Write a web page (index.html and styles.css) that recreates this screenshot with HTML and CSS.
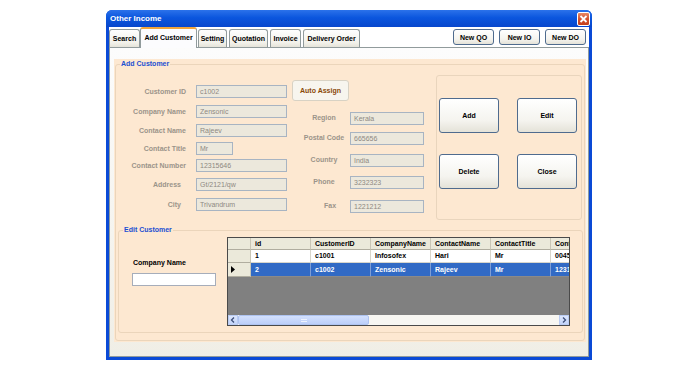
FILE: index.html
```html
<!DOCTYPE html>
<html lang="en">
  <head>
    <meta charset="UTF-8" />
    <title>Other Income</title>
    <link rel="stylesheet" href="styles.css">
  </head>
  <body>
    <div class="window">
      <div class="titlebar">
        <span class="title">Other Income</span>
        <span class="close">
          <svg width="11" height="12" viewBox="0 0 11 12"><path d="M2.5 3 L8.5 9 M8.5 3 L2.5 9" stroke="#fff" stroke-width="1.8" /></svg>
        </span>
      </div>

      <div class="body">
        <div class="toprow">
          <div class="tabs">
            <div class="tab t-search">Search</div>
            <div class="tab active">Add Customer</div>
            <div class="tab t-setting">Setting</div>
            <div class="tab t-quote">Quotation</div>
            <div class="tab t-invoice">Invoice</div>
            <div class="tab t-delivery">Delivery Order</div>
          </div>
          <div class="newbtns">
            <button class="btn new">New QO</button>
            <button class="btn new">New IO</button>
            <button class="btn new">New DO</button>
          </div>
        </div>

        <div class="tabpage">
          <div class="panel">
            <div class="group add">
              <div class="group-title">Add Customer</div>
              <div class="add-body">
                <div class="form left">
                  <label>Customer ID</label><div class="field">c1002</div>
                  <label>Company Name</label><div class="field">Zensonic</div>
                  <label>Contact Name</label><div class="field">Rajeev</div>
                  <label>Contact Title</label><div class="field short">Mr</div>
                  <label>Contact Number</label><div class="field">12315646</div>
                  <label class="inset">Address</label><div class="field">Gt/2121/qw</div>
                  <label class="inset">City</label><div class="field">Trivandrum</div>
                </div>

                <div class="middle">
                  <button class="auto">Auto Assign</button>
                  <div class="form right">
                    <label>Region</label><div class="field">Kerala</div>
                    <label>Postal Code</label><div class="field">665656</div>
                    <label>Country</label><div class="field">India</div>
                    <label>Phone</label><div class="field">3232323</div>
                    <label class="fax">Fax</label><div class="field">1221212</div>
                  </div>
                </div>

                <div class="actions">
                  <button class="btn big">Add</button>
                  <button class="btn big">Edit</button>
                  <button class="btn big">Delete</button>
                  <button class="btn big">Close</button>
                </div>
              </div>

              <div class="group edit">
                <div class="group-title">Edit Customer</div>
                <div class="edit-body">
                  <div class="search-box">
                    <div class="search-label">Company Name</div>
                    <div class="search-input"></div>
                  </div>

                  <div class="datagrid">
                    <div class="grid-rows">
                      <div class="cell corner"></div>
                      <div class="cell head">id</div>
                      <div class="cell head">CustomerID</div>
                      <div class="cell head">CompanyName</div>
                      <div class="cell head">ContactName</div>
                      <div class="cell head">ContactTitle</div>
                      <div class="cell head">ContactNumber</div>

                      <div class="cell rowhead"></div>
                      <div class="cell">1</div>
                      <div class="cell">c1001</div>
                      <div class="cell">Infosofex</div>
                      <div class="cell">Hari</div>
                      <div class="cell">Mr</div>
                      <div class="cell">0045</div>

                      <div class="cell rowhead current">
                        <svg width="4" height="7" viewBox="0 0 4 7"><path d="M0 0 L4 3.5 L0 7 Z" fill="#000" /></svg>
                      </div>
                      <div class="cell sel">2</div>
                      <div class="cell sel">c1002</div>
                      <div class="cell sel">Zensonic</div>
                      <div class="cell sel">Rajeev</div>
                      <div class="cell sel">Mr</div>
                      <div class="cell sel">1231</div>
                    </div>
                    <div class="grid-empty"></div>
                    <div class="hscroll">
                      <div class="sb-btn">
                        <svg width="6" height="6" viewBox="0 0 6 6"><path d="M4 0.5 L1.5 3 L4 5.5" stroke="#3d4f7a" stroke-width="1.3" fill="none" /></svg>
                      </div>
                      <div class="sb-thumb"><span class="grip"></span></div>
                      <div class="sb-track"></div>
                      <div class="sb-btn">
                        <svg width="6" height="6" viewBox="0 0 6 6"><path d="M2 0.5 L4.5 3 L2 5.5" stroke="#3d4f7a" stroke-width="1.3" fill="none" /></svg>
                      </div>
                    </div>
                  </div>
                </div>
              </div>
            </div>
          </div>
        </div>
      </div>
    </div>
  </body>
</html>
```

FILE: styles.css
```css
* {
  box-sizing: border-box;
}

body {
  margin: 0;
  background-color: #fff;
  font-family: "Liberation Sans", Arial, sans-serif;
  font-size: 7px;
  font-weight: bold;
  color: #000;
}

button {
  font-family: inherit;
  font-size: 7px;
  font-weight: bold;
  padding: 0;
  cursor: pointer;
}

.window {
  width: 486px;
  height: 350px;
  margin: 10px 0 0 106px;
  padding: 0 3px 3px;
  background-color: #0a4ad6;
  border-radius: 6px 6px 0 0;
  display: flex;
  flex-direction: column;
}

.titlebar {
  height: 17px;
  margin: 0 -3px;
  padding: 0 2px 0 4px;
  display: flex;
  align-items: center;
  justify-content: space-between;
  background: linear-gradient(#2b72ea, #0b56de 45%, #0847cc);
  border-radius: 6px 6px 0 0;
}

.title {
  color: #fff;
  font-size: 8px;
}

.close {
  width: 13px;
  height: 14px;
  display: flex;
  align-items: center;
  justify-content: center;
  background: linear-gradient(#e98a66, #d5512b 50%, #c4401c);
  border: 1px solid #fff;
  border-radius: 2px;
}

.body {
  flex: 1;
  background-color: #fff;
  display: flex;
  flex-direction: column;
}

.toprow {
  height: 20px;
  display: flex;
  align-items: flex-end;
}

.tabs {
  display: flex;
  align-items: flex-end;
}

.tab {
  height: 18px;
  line-height: 17px;
  text-align: center;
  white-space: nowrap;
  border: 1px solid #919b9c;
  border-bottom: none;
  border-radius: 3px 3px 0 0;
  background: linear-gradient(#fefefe, #f2f1ea 75%, #e5e3d9);
  margin-right: 2px;
}

.t-search { width: 31px; margin-right: 0; }
.t-setting { width: 29px; }
.t-quote { width: 39px; }
.t-invoice { width: 31px; }
.t-delivery { width: 57px; }

.tab.active {
  width: 57px;
  height: 21px;
  line-height: 17px;
  margin-right: 1px;
  margin-bottom: -1px;
  background: #fcfcfe;
  border-top: 2px solid #f0a53c;
  position: relative;
  z-index: 1;
}

.newbtns {
  margin-left: auto;
  align-self: flex-start;
  margin-top: 2px;
  padding-right: 3px;
  display: flex;
  gap: 5px;
}

.btn {
  border: 1px solid #4f6b8e;
  border-radius: 3px;
  background: linear-gradient(#ffffff, #f5f4ef 65%, #e4e2d8);
  color: #000;
}

.btn.new {
  width: 41px;
  height: 16px;
}

.btn.big {
  width: 60px;
  height: 35px;
}

.tabpage {
  flex: 1;
  border: 1px solid #919b9c;
  background: linear-gradient(#fcfcfc, #f5f4ef 60%, #f0eee6);
  padding: 11px 3px 0 4px;
}

.panel {
  width: 472px;
  height: 283px;
  background-color: #fde8d1;
  padding: 5px 1px 0 1px;
}

.group {
  border: 1px solid #ebd5bb;
  border-radius: 3px;
}

.group-title {
  width: fit-content;
  height: 10px;
  line-height: 10px;
  margin: -6px 0 0 4px;
  padding: 0 1px;
  background-color: #fde8d1;
  color: #1c4fd2;
}

.group.add {
  width: 470px;
  height: 277px;
}

.add-body {
  display: flex;
  align-items: flex-start;
}

.form {
  display: grid;
}

.form label {
  white-space: nowrap;
  color: #9b948a;
}

.form.left {
  margin-top: 16px;
  grid-template-columns: 71px 91px;
  grid-template-rows: 20px 19px 18px 17px 19px 20px 13px;
  column-gap: 9px;
}

.form.left label {
  text-align: right;
  line-height: 13px;
  padding-right: 1px;
}

.form.left label.inset {
  padding-right: 6px;
}

.field {
  height: 13px;
  border: 1px solid #a8b4c2;
  background-color: #ece8dc;
  color: #8e8982;
  font-weight: normal;
  line-height: 11px;
  padding-left: 3px;
  white-space: nowrap;
}

.field.short {
  width: 37px;
}

.middle {
  width: 132px;
  margin-left: 5px;
}

.auto {
  width: 57px;
  height: 21px;
  margin-top: 11px;
  border: 1px solid #d8d2c4;
  border-radius: 3px;
  background-color: #f7f5ee;
  color: #8a4908;
}

.form.right {
  margin: 11px 0 0 6px;
  grid-template-columns: 52px 74px;
  grid-template-rows: 20px 22px 22px 24px 13px;
}

.form.right label {
  text-align: center;
  line-height: 9px;
  margin-top: 1px;
}

.form.right label.fax {
  padding-left: 12px;
}

.actions {
  width: 146px;
  height: 145px;
  margin: 6px 0 0 12px;
  padding: 22px 0 0 2px;
  border: 1px solid #e9d5bd;
  border-radius: 3px;
  display: grid;
  grid-template-columns: 60px 60px;
  grid-template-rows: 35px 35px;
  column-gap: 18px;
  row-gap: 21px;
}

.group.edit {
  width: 465px;
  height: 103px;
  margin: 10px 0 0 2px;
}

.edit-body {
  display: flex;
  margin-top: 2px;
}

.search-box {
  width: 108px;
}

.search-label {
  line-height: 9px;
  margin-top: 21px;
  padding-left: 14px;
}

.search-input {
  width: 84px;
  height: 13px;
  margin: 6px 0 0 13px;
  border: 1px solid #a6adba;
  background-color: #fff;
}

.datagrid {
  width: 343px;
  height: 89px;
  border: 1px solid #4a4a4a;
  background-color: #808080;
  display: flex;
  flex-direction: column;
  overflow: hidden;
}

.grid-rows {
  display: grid;
  grid-template-columns: 23px repeat(6, 60px);
  grid-template-rows: 12px 13px 14px;
  width: 383px;
}

.cell {
  border-right: 1px solid #d8d6cc;
  border-bottom: 1px solid #d8d6cc;
  background-color: #fff;
  padding-left: 4px;
  line-height: 12px;
  white-space: nowrap;
  overflow: hidden;
}

.cell.head,
.cell.corner,
.cell.rowhead {
  background-color: #ebe9da;
  border-right-color: #c9c6b6;
  border-bottom-color: #b0ad9f;
  line-height: 11px;
}

.cell.rowhead.current {
  display: flex;
  align-items: center;
  padding-left: 3px;
}

.cell.sel {
  background-color: #316ac5;
  color: #fff;
  border-right-color: #7f9ed6;
  border-bottom-color: #8a8a8a;
  line-height: 13px;
}

.grid-empty {
  flex: 1;
}

.hscroll {
  height: 10px;
  display: flex;
  background-color: #f7f6f2;
}

.sb-btn {
  width: 10px;
  display: flex;
  align-items: center;
  justify-content: center;
  background: linear-gradient(#dde7fd, #c3d4f9);
  border: 1px solid #b9cbf3;
}

.sb-thumb {
  width: 131px;
  display: flex;
  align-items: center;
  justify-content: center;
  background: linear-gradient(#d3e0fd, #bccffa);
  border: 1px solid #aec3f1;
  border-radius: 2px;
}

.grip {
  width: 6px;
  height: 3px;
  border-top: 1px solid #eef3ff;
  border-bottom: 1px solid #eef3ff;
}

.sb-track {
  flex: 1;
}
```
